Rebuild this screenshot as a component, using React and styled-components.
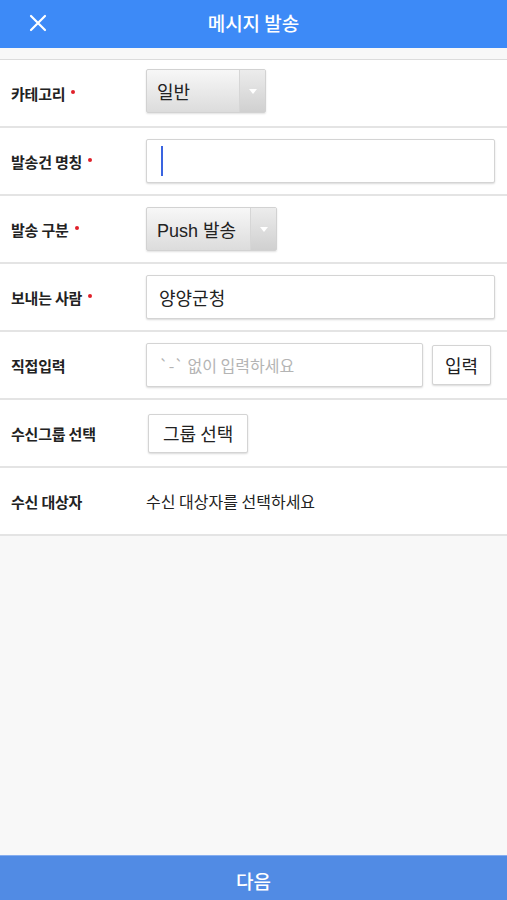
import React from 'react';
import styled, { createGlobalStyle } from 'styled-components';

const GlobalStyle = createGlobalStyle`
  html, body {
    margin: 0;
    padding: 0;
    height: 100%;
  }
  body {
    font-family: "Noto Sans CJK KR", "Noto Sans", sans-serif;
    background: #f8f8f8;
  }
  #root {
    height: 100%;
  }
`;

const Screen = styled.div`
  display: flex;
  flex-direction: column;
  height: 900px;
  width: 507px;
  background: #f8f8f8;
`;

const Header = styled.div`
  position: relative;
  height: 48px;
  flex-shrink: 0;
  box-sizing: border-box;
  padding-bottom: 4px;
  background: #3d8af7;
  display: flex;
  align-items: center;
  justify-content: center;
  color: #fff;
  font-size: 19px;
  font-weight: 500;
`;

const CloseButton = styled.button`
  position: absolute;
  left: 26px;
  top: 11px;
  width: 24px;
  height: 24px;
  padding: 0;
  border: none;
  background: transparent;
  display: flex;
  align-items: center;
  justify-content: center;
`;

const Gap = styled.div`
  height: 11px;
  flex-shrink: 0;
  background: #f8f8f8;
`;

const Form = styled.div`
  background: #fff;
  border-top: 1px solid #dcdcdc;
`;

const Row = styled.div`
  height: 66px;
  display: flex;
  align-items: center;
  border-bottom: 2px solid #e4e4e4;
`;

const Label = styled.div`
  width: 146px;
  flex-shrink: 0;
  padding-left: 11px;
  box-sizing: border-box;
  display: flex;
  align-items: center;
  font-size: 15px;
  font-weight: 700;
  color: #222;
  letter-spacing: -0.2px;
`;

const Req = styled.span`
  display: inline-block;
  width: 4px;
  height: 4px;
  border-radius: 50%;
  background: #e0202a;
  margin-left: 6px;
  margin-top: -3px;
`;

const Select = styled.div`
  display: flex;
  height: 44px;
  width: ${p => p.$w}px;
  box-sizing: border-box;
  border: 1px solid #d2d2d2;
  border-radius: 2px;
  background: linear-gradient(#f7f7f7, #dcdcdc);
  box-shadow: 0 1px 2px rgba(0, 0, 0, 0.12);
  margin-top: ${p => p.$mt || 0}px;
`;

const SelectText = styled.div`
  flex: 1;
  display: flex;
  align-items: center;
  padding-left: 10px;
  font-size: 18px;
  font-family: "Liberation Sans", "Noto Sans CJK KR", sans-serif;
  color: #222;
`;

const SelectArrow = styled.div`
  width: 25px;
  display: flex;
  align-items: center;
  justify-content: center;
  border-left: 1px solid #d6d6d6;
  background: linear-gradient(#ececec, #d0d0d0);
  &::after {
    content: '';
    border-left: 4px solid transparent;
    border-right: 4px solid transparent;
    border-top: 5px solid #fff;
  }
`;

const Input = styled.div`
  height: 44px;
  width: ${p => p.$w}px;
  box-sizing: border-box;
  border: 1px solid #d4d4d4;
  border-radius: 2px;
  background: #fff;
  box-shadow: 0 1px 2px rgba(0, 0, 0, 0.15);
  display: flex;
  align-items: center;
  padding-left: 12px;
  font-size: ${p => (p.$placeholder ? 16 : 18)}px;
  color: ${p => (p.$placeholder ? '#b4b4b4' : '#222')};
`;

const Caret = styled.div`
  width: 2px;
  height: 30px;
  background: #3a64e0;
  margin-left: 2px;
`;

const Button = styled.div`
  height: ${p => p.$h}px;
  padding: 0 ${p => p.$px}px;
  box-sizing: border-box;
  border: 1px solid #d4d4d4;
  border-radius: 2px;
  background: #fff;
  box-shadow: 0 1px 2px rgba(0, 0, 0, 0.15);
  display: flex;
  align-items: center;
  font-size: 18px;
  color: #222;
  margin-left: ${p => p.$ml || 0}px;
`;

const Info = styled.div`
  font-size: 16px;
  color: #222;
`;

const Spacer = styled.div`
  flex: 1;
  background: #f8f8f8;
`;

const Footer = styled.div`
  height: 45px;
  flex-shrink: 0;
  box-sizing: border-box;
  padding-top: 4px;
  background: #518be4;
  border-top: 1px solid #86aef0;
  display: flex;
  align-items: center;
  justify-content: center;
  color: #fff;
  font-size: 19px;
  font-weight: 500;
`;

const App = () => {
  return (
    <Screen>
      <GlobalStyle />
      <Header>
        <CloseButton>
          <svg width="18" height="18" viewBox="0 0 18 18">
            <path d="M2 2 L16 16 M16 2 L2 16" stroke="#fff" strokeWidth="2.2" strokeLinecap="round" />
          </svg>
        </CloseButton>
        메시지 발송
      </Header>
      <Gap />
      <Form>
        <Row>
          <Label>카테고리<Req /></Label>
          <Select $w={120} $mt={-4}>
            <SelectText>일반</SelectText>
            <SelectArrow />
          </Select>
        </Row>
        <Row>
          <Label>발송건 명칭<Req /></Label>
          <Input $w={349}>
            <Caret />
          </Input>
        </Row>
        <Row>
          <Label>발송 구분<Req /></Label>
          <Select $w={131}>
            <SelectText>Push 발송</SelectText>
            <SelectArrow />
          </Select>
        </Row>
        <Row>
          <Label>보내는 사람<Req /></Label>
          <Input $w={349}>양양군청</Input>
        </Row>
        <Row>
          <Label>직접입력</Label>
          <Input $w={277} $placeholder>`-` 없이 입력하세요</Input>
          <Button $h={40} $px={12} $ml={9}>입력</Button>
        </Row>
        <Row>
          <Label>수신그룹 선택</Label>
          <Button $h={39} $px={14} $ml={2}>그룹 선택</Button>
        </Row>
        <Row>
          <Label>수신 대상자</Label>
          <Info>수신 대상자를 선택하세요</Info>
        </Row>
      </Form>
      <Spacer />
      <Footer>다음</Footer>
    </Screen>
  );
};

export default App;
